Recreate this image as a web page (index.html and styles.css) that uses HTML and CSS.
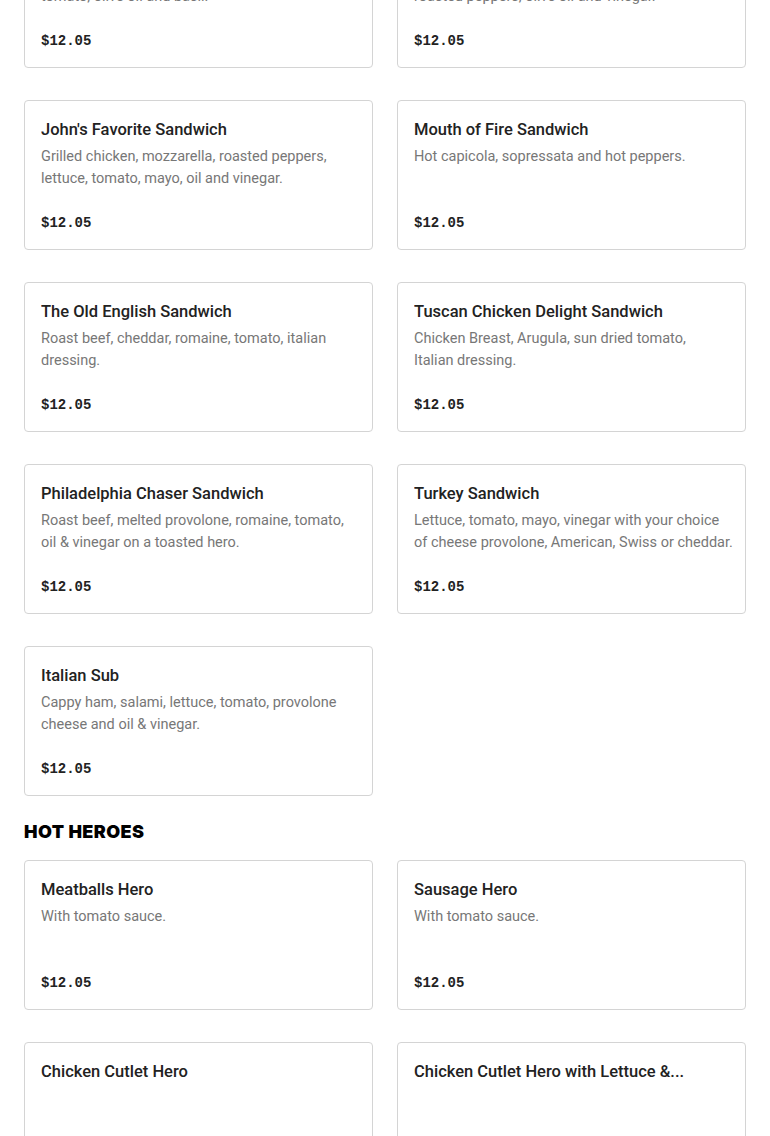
FILE: index.html
```html
<!DOCTYPE html>
<html lang="en">
<head>
<meta charset="utf-8">
<title>Menu</title>
<link rel="stylesheet" href="styles.css">
</head>
<body>
<main class="menu">
  <section class="section">
    <div class="grid">
      <article class="card">
        <h3 class="card-title">Caprese Sandwich</h3>
        <p class="card-desc">Homemade fresh mozzarella, sliced beefsteak tomato, olive oil and basil.</p>
        <p class="card-price">$12.05</p>
      </article>
      <article class="card">
        <h3 class="card-title">Prosciutto Sandwich</h3>
        <p class="card-desc">Prosciutto, fresh mozzarella, baby arugula, roasted peppers, olive oil and vinegar.</p>
        <p class="card-price">$12.05</p>
      </article>
      <article class="card">
        <h3 class="card-title">John's Favorite Sandwich</h3>
        <p class="card-desc">Grilled chicken, mozzarella, roasted peppers, lettuce, tomato, mayo, oil and vinegar.</p>
        <p class="card-price">$12.05</p>
      </article>
      <article class="card">
        <h3 class="card-title">Mouth of Fire Sandwich</h3>
        <p class="card-desc">Hot capicola, sopressata and hot peppers.</p>
        <p class="card-price">$12.05</p>
      </article>
      <article class="card">
        <h3 class="card-title">The Old English Sandwich</h3>
        <p class="card-desc">Roast beef, cheddar, romaine, tomato, italian dressing.</p>
        <p class="card-price">$12.05</p>
      </article>
      <article class="card">
        <h3 class="card-title">Tuscan Chicken Delight Sandwich</h3>
        <p class="card-desc">Chicken Breast, Arugula, sun dried tomato, Italian&nbsp;dressing.</p>
        <p class="card-price">$12.05</p>
      </article>
      <article class="card">
        <h3 class="card-title">Philadelphia Chaser Sandwich</h3>
        <p class="card-desc">Roast beef, melted provolone, romaine, tomato, oil &amp; vinegar on a toasted hero.</p>
        <p class="card-price">$12.05</p>
      </article>
      <article class="card">
        <h3 class="card-title">Turkey Sandwich</h3>
        <p class="card-desc">Lettuce, tomato, mayo, vinegar with your choice of cheese provolone, American, Swiss or cheddar.</p>
        <p class="card-price">$12.05</p>
      </article>
      <article class="card">
        <h3 class="card-title">Italian Sub</h3>
        <p class="card-desc">Cappy ham, salami, lettuce, tomato, provolone cheese and oil &amp; vinegar.</p>
        <p class="card-price">$12.05</p>
      </article>
    </div>
  </section>
  <section class="section">
    <h2 class="section-title">HOT HEROES</h2>
    <div class="grid">
      <article class="card">
        <h3 class="card-title">Meatballs Hero</h3>
        <p class="card-desc">With tomato sauce.</p>
        <p class="card-price">$12.05</p>
      </article>
      <article class="card">
        <h3 class="card-title">Sausage Hero</h3>
        <p class="card-desc">With tomato sauce.</p>
        <p class="card-price">$12.05</p>
      </article>
      <article class="card">
        <h3 class="card-title">Chicken Cutlet Hero</h3>
        <p class="card-price">$12.05</p>
      </article>
      <article class="card">
        <h3 class="card-title">Chicken Cutlet Hero with Lettuce &amp;...</h3>
        <p class="card-price">$12.05</p>
      </article>
    </div>
  </section>
</main>
</body>
</html>
```
FILE: styles.css
```css
html, body {
  margin: 0;
  padding: 0;
  background: #ffffff;
}

body {
  font-family: "Roboto", "Liberation Sans", sans-serif;
  color: #222222;
  overflow: hidden;
}

.menu {
  padding: 0 24px;
  margin-top: -82px;
}

.section-title {
  margin: 24px 0 16px;
  font-family: "Inter", "Liberation Sans", sans-serif;
  font-size: 18px;
  line-height: 24px;
  font-weight: 900;
  color: #000000;
  letter-spacing: 0.4px;
}

.grid {
  display: grid;
  grid-template-columns: minmax(0, 1fr) minmax(0, 1fr);
  column-gap: 24px;
  row-gap: 32px;
}

.card {
  box-sizing: border-box;
  height: 150px;
  border: 1px solid #d4d4d4;
  border-radius: 4px;
  padding: 17px 12px 15px 16px;
  display: flex;
  flex-direction: column;
  background: #ffffff;
}

.card-title {
  margin: 0;
  font-size: 16.5px;
  line-height: 24px;
  font-weight: 500;
  color: #222222;
  white-space: nowrap;
  overflow: hidden;
  text-overflow: ellipsis;
}

.card-desc {
  margin: 4px 0 0;
  font-size: 14.5px;
  line-height: 22px;
  color: #777777;
}

.card-price {
  margin: auto 0 0;
  font-family: "Liberation Mono", "DejaVu Sans Mono", monospace;
  font-size: 14px;
  line-height: 22px;
  font-weight: 700;
  color: #222222;
}
```
